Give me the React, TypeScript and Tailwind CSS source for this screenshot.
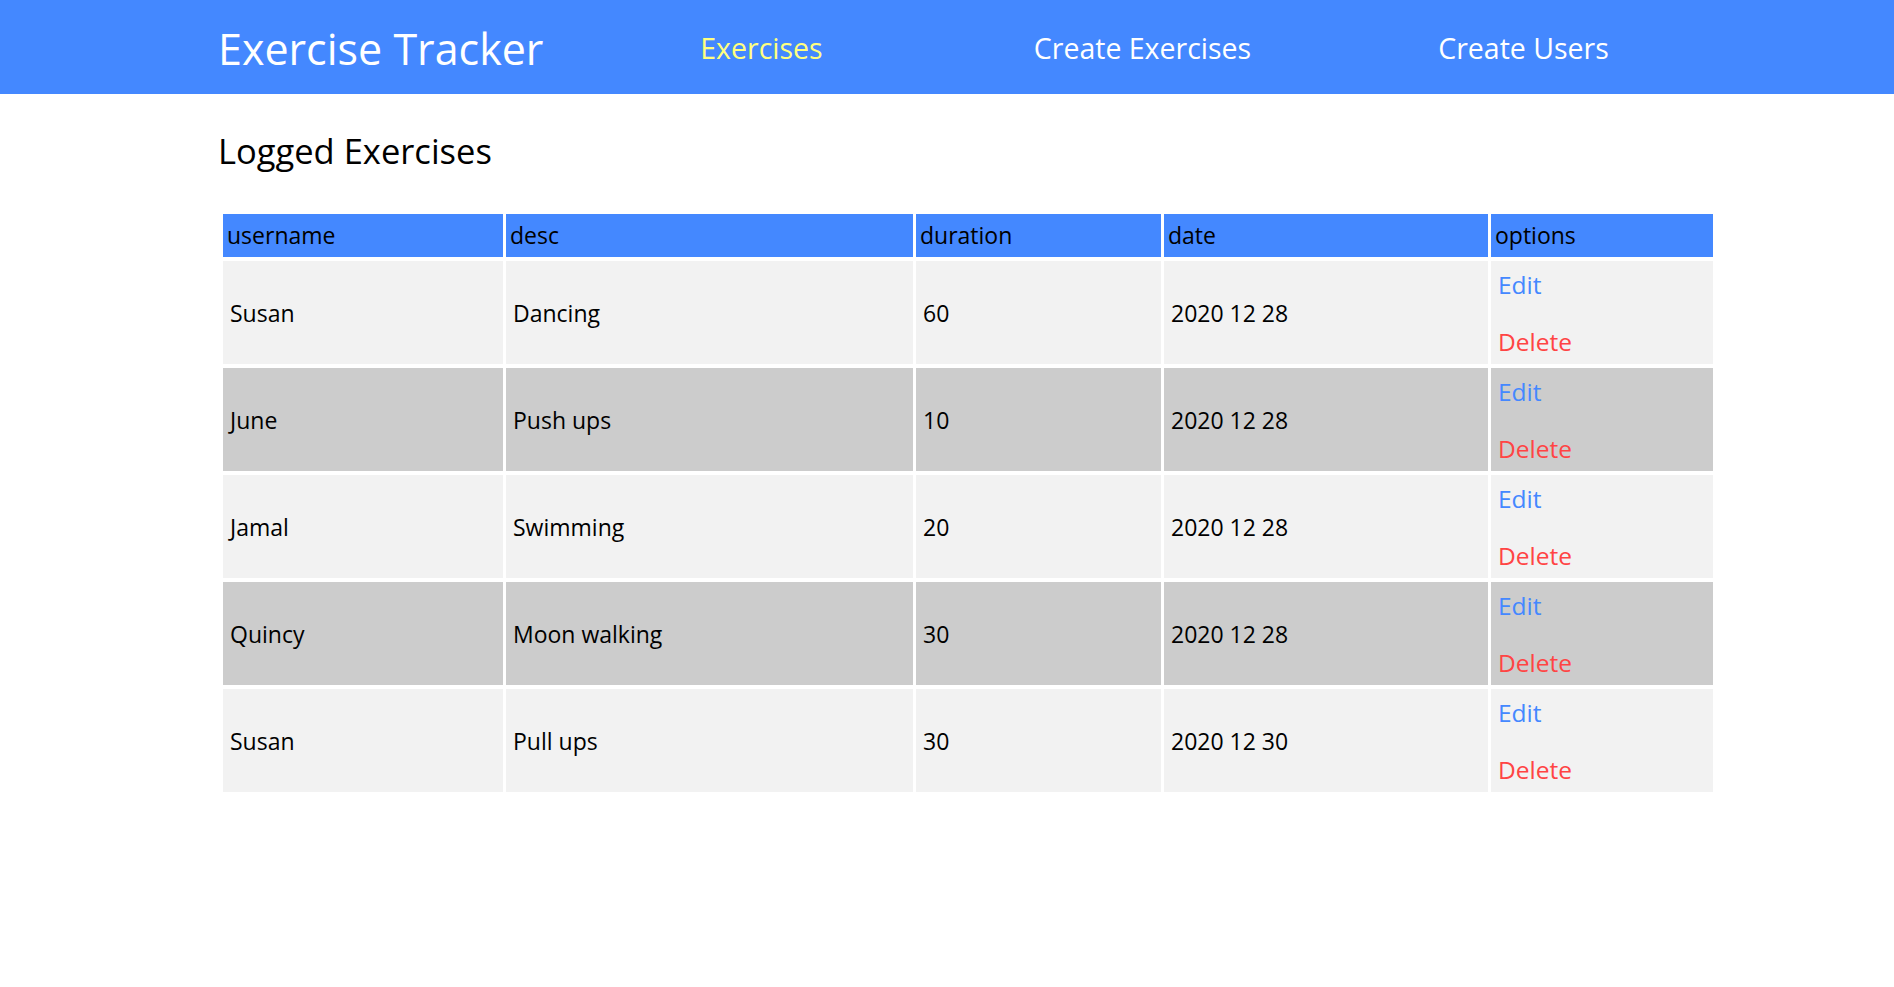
import React from "react";

const rows = [
  { user: "Susan", desc: "Dancing", duration: "60", date: "2020 12 28" },
  { user: "June", desc: "Push ups", duration: "10", date: "2020 12 28" },
  { user: "Jamal", desc: "Swimming", duration: "20", date: "2020 12 28" },
  { user: "Quincy", desc: "Moon walking", duration: "30", date: "2020 12 28" },
  { user: "Susan", desc: "Pull ups", duration: "30", date: "2020 12 30" },
];

export default function App() {
  return (
    <div
      className="min-h-screen bg-white text-black"
      style={{ fontFamily: '"Open Sans", "Noto Sans", sans-serif' }}
    >
      <header className="h-[94px] bg-[#4488ff]">
        <div className="ml-[218px] flex h-full w-[1496px] items-center pt-[2px]">
          <div className="w-[355px] text-[43px] leading-none text-white">Exercise Tracker</div>
          <nav className="flex">
            <a className="w-[381px] text-center text-[28.5px] leading-none text-[#ffff80]">Exercises</a>
            <a className="w-[381px] text-center text-[28.5px] leading-none text-white">Create Exercises</a>
            <a className="w-[381px] text-center text-[28.5px] leading-none text-white">Create Users</a>
          </nav>
        </div>
      </header>
      <main className="ml-[218px] w-[1500px]">
        <h2 className="mt-[36px] text-[34.5px] font-normal leading-[1.2]">Logged Exercises</h2>
        <table className="ml-[2px] mt-[39px] w-[1496px] table-fixed border-separate [border-spacing:3px_4px] text-[23px]">
          <colgroup>
            <col className="w-[280px]" />
            <col className="w-[407px]" />
            <col className="w-[245px]" />
            <col className="w-[324px]" />
            <col className="w-[222px]" />
          </colgroup>
          <thead>
            <tr className="h-[43px]">
              {["username", "desc", "duration", "date", "options"].map((h) => (
                <th key={h} className="bg-[#4488ff] pl-[4px] text-left font-normal leading-[1.2]">
                  {h}
                </th>
              ))}
            </tr>
          </thead>
          <tbody>
            {rows.map((r, i) => {
              const bg = i % 2 === 0 ? "bg-[#f2f2f2]" : "bg-[#cccccc]";
              return (
                <tr key={i} className="h-[103px]">
                  <td className={`${bg} px-[7px] leading-[1.5]`}>{r.user}</td>
                  <td className={`${bg} px-[7px] leading-[1.5]`}>{r.desc}</td>
                  <td className={`${bg} px-[7px] leading-[1.5]`}>{r.duration}</td>
                  <td className={`${bg} px-[7px] leading-[1.5]`}>{r.date}</td>
                  <td className={`${bg} px-[7px] pt-[6px] align-top`}>
                    <a className="block text-[24.5px] leading-[1.5] text-[#4488ff]">Edit</a>
                    <a className="mt-[20px] block text-[24.5px] leading-[1.5] text-[#ff4444]">Delete</a>
                  </td>
                </tr>
              );
            })}
          </tbody>
        </table>
      </main>
    </div>
  );
}
